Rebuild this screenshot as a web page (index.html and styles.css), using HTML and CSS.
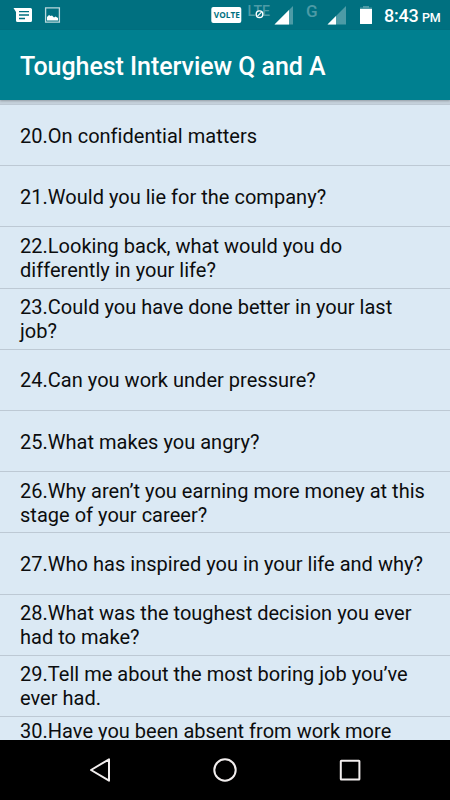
FILE: index.html
```html
<!DOCTYPE html>
<html lang="en">
<head>
<meta charset="utf-8">
<title>Toughest Interview Q and A</title>
<link rel="stylesheet" href="styles.css">
</head>
<body>
<div class="screen">
  <div class="status">
    <svg class="status-icons" width="80" height="30" viewBox="0 0 80 30">
      <path fill="#fff" d="M13.500 8H30.500Q32 8 32 9.500V20.500Q32 22 30.500 22H17.500Q16 22 16 20.500V12Z"/>
      <path stroke="#007080" stroke-width="1.300" d="M19 11.700H29M19 15H29M19 18.500H25"/>
      <path fill="none" stroke="#b9d8dc" stroke-width="1.300" d="M45.600 7.900H59.400V22.100H45.600Z"/>
      <path fill="#fff" d="M47 20.500V17L49 15L50.500 16L52 15.500L54 17.500L55.500 16.500L58 18V20.500Z"/>
    </svg>
    <svg class="status-icons" width="170" height="30" viewBox="210 0 170 30">
      <rect x="211.300" y="7" width="30" height="16" rx="2" fill="#fff"/>
      <text class="volte" x="213.800" y="18.300" textLength="26" lengthAdjust="spacingAndGlyphs">VOLTE</text>
      <text class="net" x="247.500" y="16" font-size="14" textLength="22.500" lengthAdjust="spacingAndGlyphs">LTE</text>
      <circle cx="259.500" cy="14.200" r="3.300" fill="#007080" stroke="#fff" stroke-width="1.400"/>
      <path stroke="#fff" stroke-width="1.200" d="M257.500 16.200L261.500 12.200"/>
      <path fill="#4d9ba6" d="M293 6V24.500H274.500Z"/>
      <path fill="#fff" d="M289 10V24.500H274.500Z"/>
      <text class="net" x="306" y="17" font-size="17">G</text>
      <path fill="#4d9ba6" d="M346 6V24.500H327.500Z"/>
      <path fill="#fff" d="M336 16V24.500H327.500Z"/>
      <path fill="#4d9ba6" d="M360 9V7.500H363V6H369V7.500H372V9Z"/>
      <path fill="#fff" d="M360 9H372V23.500Q372 24 371.500 24H360.500Q360 24 360 23.500Z"/>
    </svg>
    <div class="clock">8:43 <span class="meridiem">PM</span></div>
  </div>
  <header class="appbar"><h1>Toughest Interview Q and A</h1></header>
  <ul class="list">
    <li>20.On confidential matters</li>
    <li>21.Would you lie for the company?</li>
    <li>22.Looking back, what would you do<br>differently in your life?</li>
    <li>23.Could you have done better in your last<br>job?</li>
    <li>24.Can you work under pressure?</li>
    <li>25.What makes you angry?</li>
    <li>26.Why aren’t you earning more money at this<br>stage of your career?</li>
    <li>27.Who has inspired you in your life and why?</li>
    <li>28.What was the toughest decision you ever<br>had to make?</li>
    <li>29.Tell me about the most boring job you’ve<br>ever had.</li>
    <li class="partial">30.Have you been absent from work more</li>
  </ul>
  <nav class="navbar">
    <svg width="24" height="26" viewBox="88 757 24 26"><path d="M91 770L109 759.300V780.700Z"/></svg>
    <svg width="26" height="26" viewBox="212 757 26 26"><circle cx="225" cy="770" r="10.700"/></svg>
    <svg width="24" height="26" viewBox="338 757 24 26"><rect x="340.800" y="760.800" width="18.600" height="18.600" rx=".5"/></svg>
  </nav>
</div>
</body>
</html>
```
FILE: styles.css
```css
* { box-sizing: border-box; }
body { margin: 0; font-family: Roboto, sans-serif; }
.screen {
  width: 450px;
  height: 800px;
  display: flex;
  flex-direction: column;
  overflow: hidden;
  background: #dbe9f4;
}
.status {
  flex: none;
  height: 30px;
  display: flex;
  background: #007080;
  color: #fff;
}
.status-icons { flex: none; display: block; }
.status-icons + .status-icons { margin-left: 130px; }
.volte { font: 700 9px "Open Sans", sans-serif; fill: #007080; }
.net { font-family: Roboto, sans-serif; font-weight: 500; fill: #4d9ba6; }
.clock {
  margin-left: 4px;
  font-size: 18px;
  font-weight: 500;
  line-height: 32px;
  letter-spacing: -.2px;
  white-space: nowrap;
}
.meridiem { font-size: 12.5px; margin-left: -1px; }
.appbar {
  flex: none;
  height: 70px;
  padding: 3px 20px 0;
  display: flex;
  align-items: center;
  background: #008090;
  box-shadow: 0 1px 2px rgba(0, 0, 0, .25);
  z-index: 1;
}
h1 {
  margin: 0;
  color: #fff;
  font-size: 25px;
  font-weight: 500;
  letter-spacing: -.05px;
  white-space: nowrap;
}
.list {
  flex: 1;
  min-height: 0;
  margin: 0;
  padding: 4px 0 0;
  overflow: hidden;
  list-style: none;
  background: linear-gradient(#c5d1db 4px, #dbe9f4 4px);
}
.list li {
  height: 61.2px;
  padding: 1px 20px 0;
  display: grid;
  align-content: center;
  border-top: 1px solid #bdc9d4;
  color: #0c0d0e;
  font-size: 20px;
  line-height: 24px;
  letter-spacing: .02px;
  white-space: nowrap;
}
.list .partial {
  height: 24px;
  padding-top: 3px;
  align-content: start;
  line-height: 22px;
}
.navbar {
  flex: none;
  height: 60px;
  padding: 0 88px;
  display: flex;
  align-items: center;
  justify-content: space-between;
  background: #000;
}
.navbar svg { fill: none; stroke: #f2eeee; stroke-width: 2; stroke-linejoin: round; }
```
